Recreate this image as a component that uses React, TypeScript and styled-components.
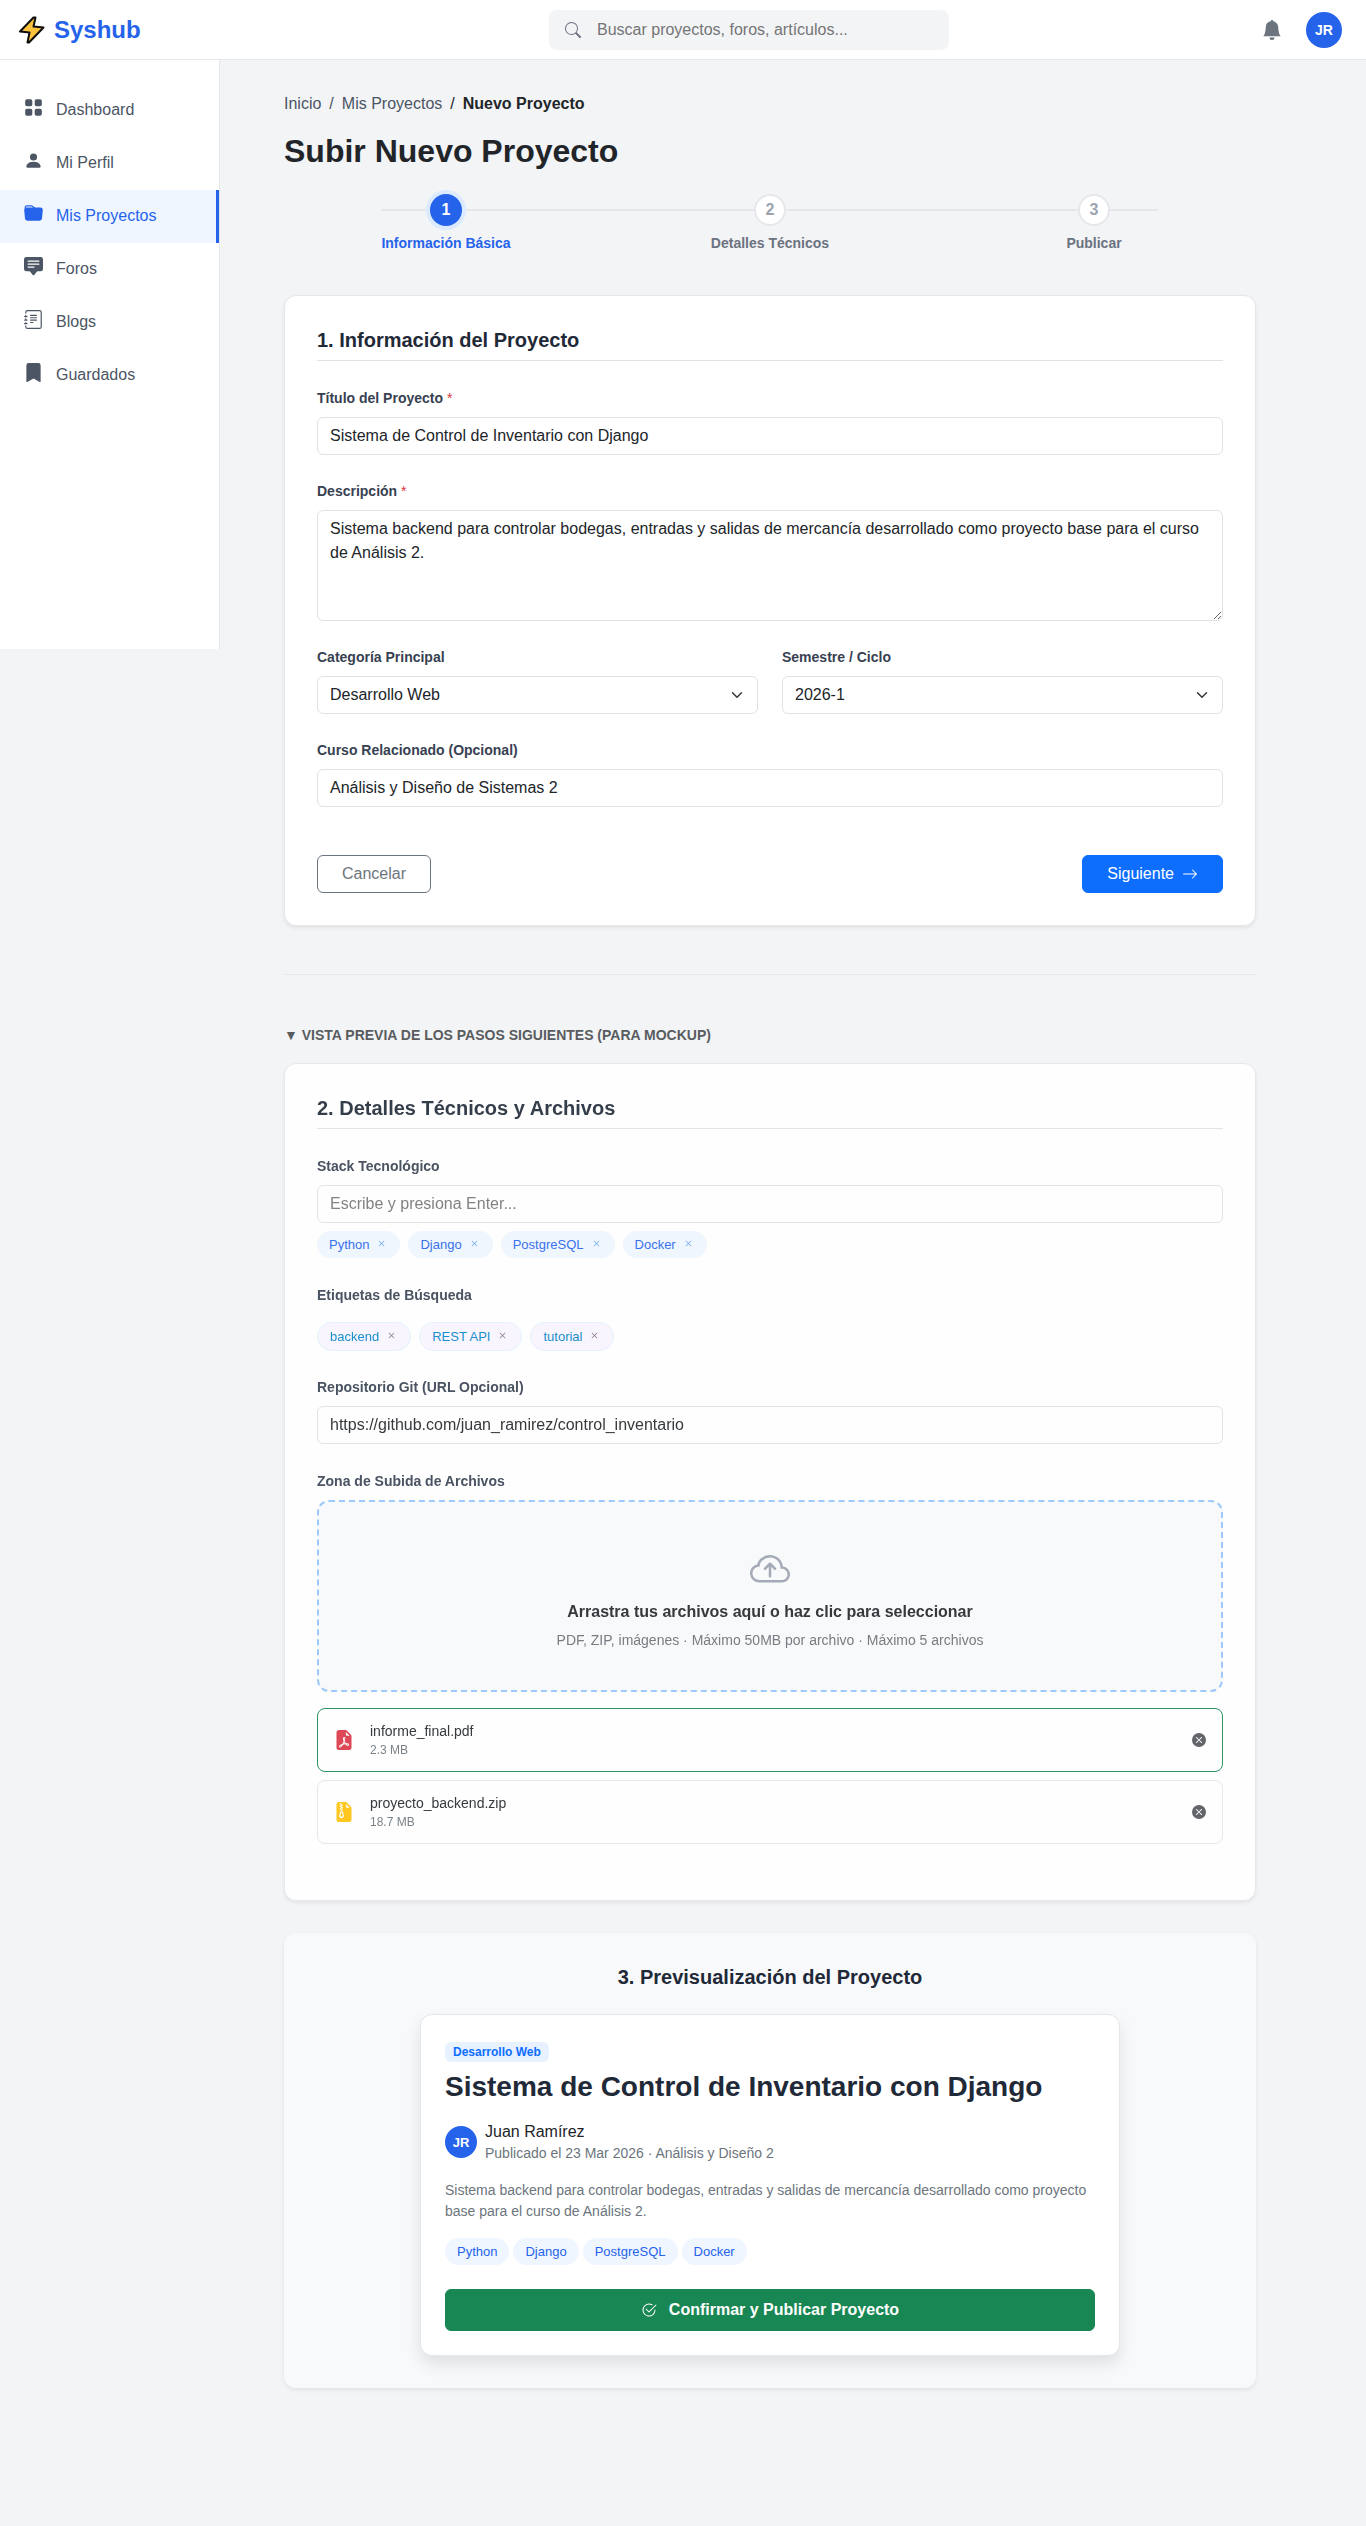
import React, { useState } from "react";
import styled, { createGlobalStyle, css } from "styled-components";
import {
  BsArrowRight,
  BsBellFill,
  BsBookmarkFill,
  BsChatSquareTextFill,
  BsCheck2Circle,
  BsCloudArrowUp,
  BsFileEarmarkPdfFill,
  BsFileEarmarkZipFill,
  BsFolderFill,
  BsGridFill,
  BsJournalText,
  BsPersonFill,
  BsSearch,
  BsX,
  BsXCircleFill,
} from "react-icons/bs";

const GlobalStyle = createGlobalStyle`
  *, *::before, *::after { box-sizing: border-box; }
  body {
    margin: 0;
    background: #f3f4f6;
    color: #212529;
    font: 16px/24px "Liberation Sans", Arial, sans-serif;
  }
  h1, h2, h3, p, ol, ul { margin: 0; padding: 0; }
  ol, ul { list-style: none; }
  a { color: inherit; text-decoration: none; }
  button, input, select, textarea { font: inherit; color: inherit; }
  button { cursor: pointer; }
  svg { display: block; flex: none; }
`;

const Header = styled.header`
  display: flex;
  align-items: center;
  justify-content: space-between;
  height: 60px;
  padding: 0 24px 0 16px;
  background: #fff;
  border-bottom: 1px solid #e5e7eb;
`;

const Brand = styled.a`
  display: flex;
  align-items: center;
  gap: 6px;
  width: 220px;
  color: #2563eb;
  font-size: 24px;
  font-weight: 700;
`;

const SearchBox = styled.label`
  display: flex;
  align-items: center;
  gap: 16px;
  flex: 0 1 400px;
  height: 40px;
  padding: 0 16px;
  border-radius: 8px;
  background: #f3f4f6;
  color: #6b7280;

  input {
    flex: 1;
    min-width: 0;
    padding: 0;
    border: 0;
    outline: 0;
    background: transparent;
  }
`;

const HeaderActions = styled.div`
  display: flex;
  align-items: center;
  gap: 24px;
`;

const IconButton = styled.button`
  display: flex;
  padding: 0;
  border: 0;
  background: none;
  color: #6c757d;
`;

const Avatar = styled.span<{ $small?: boolean }>`
  display: flex;
  align-items: center;
  justify-content: center;
  flex: none;
  width: ${(p) => (p.$small ? 32 : 36)}px;
  height: ${(p) => (p.$small ? 32 : 36)}px;
  border-radius: 50%;
  background: #2563eb;
  color: #fff;
  font-size: ${(p) => (p.$small ? 13 : 14)}px;
  font-weight: 700;
`;

const Layout = styled.div`
  display: flex;
  align-items: flex-start;
`;

const Sidebar = styled.nav`
  flex: 0 0 220px;
  min-height: 589px;
  padding: 24px 0;
  background: #fff;
  border-right: 1px solid #e5e7eb;
`;

const NavItem = styled.a<{ $active?: boolean }>`
  display: flex;
  align-items: center;
  gap: 13px;
  height: 53px;
  padding: 0 21px 2px 24px;
  border-right: 3px solid transparent;
  color: #4b5563;

  svg { margin-bottom: 4px; }

  ${(p) =>
    p.$active &&
    css`
      background: #eff6ff;
      border-right-color: #2563eb;
      color: #2563eb;
    `}
`;

const Main = styled.main`
  flex: 1;
  min-width: 0;
  max-width: 1100px;
  padding: 32px 64px;
`;

const Breadcrumb = styled.ol`
  display: flex;
  color: #4b5563;

  li + li::before {
    content: "/";
    padding: 0 8px;
  }
  li[aria-current] {
    color: #212529;
    font-weight: 700;
  }
  li[aria-current]::before { font-weight: 400; }
`;

const PageTitle = styled.h1`
  margin: 16px 0 24px;
  font-size: 32px;
  line-height: 38px;
`;

const Stepper = styled.ol`
  display: grid;
  grid-template-columns: repeat(3, 1fr);
  margin-bottom: 43px;
  background: linear-gradient(#e5e7eb, #e5e7eb) center 15px / 80% 2px no-repeat;
`;

const Step = styled.li<{ $active?: boolean }>`
  display: flex;
  flex-direction: column;
  align-items: center;
  gap: 8px;
  color: ${(p) => (p.$active ? "#2563eb" : "#6b7280")};
  font-size: 14px;
  font-weight: 700;
  line-height: 18px;
`;

const StepCircle = styled.span<{ $active?: boolean }>`
  display: flex;
  align-items: center;
  justify-content: center;
  width: 32px;
  height: 32px;
  border: 2px solid ${(p) => (p.$active ? "#2563eb" : "#e5e7eb")};
  border-radius: 50%;
  background: ${(p) => (p.$active ? "#2563eb" : "#fff")};
  color: ${(p) => (p.$active ? "#fff" : "#9ca3af")};
  box-shadow: ${(p) => (p.$active ? "0 0 0 4px #dbeafe" : "none")};
  font-size: 16px;
`;

const Card = styled.section<{ $muted?: boolean; $soft?: boolean }>`
  padding: 32px;
  border: ${(p) => (p.$soft ? "0" : "1px solid #e5e7eb")};
  border-radius: 12px;
  background: ${(p) => (p.$soft ? "#f8f9fb" : "#fff")};
  box-shadow: 0 2px 4px rgba(0, 0, 0, 0.075);
  opacity: ${(p) => (p.$muted ? 0.9 : 1)};
  margin-bottom: ${(p) => (p.$muted ? 32 : 0)}px;
`;

const CardTitle = styled.h2<{ $centered?: boolean }>`
  color: #1f2937;
  font-size: 20px;
  line-height: 24px;
  margin-bottom: 25px;
  ${(p) =>
    p.$centered
      ? css`
          text-align: center;
        `
      : css`
          padding-bottom: 8px;
          border-bottom: 1px solid #dee2e6;
        `}
`;

const Field = styled.div`
  margin-bottom: 24px;
`;

const FieldRow = styled.div`
  display: grid;
  grid-template-columns: 1fr 1fr;
  gap: 24px;
`;

const labelStyle = css`
  display: block;
  padding-top: 2px;
  margin-bottom: 8px;
  color: #374151;
  font-size: 14px;
  font-weight: 700;
  line-height: 21px;
`;

const Label = styled.label`
  ${labelStyle}
`;

const GroupLabel = styled.p`
  ${labelStyle}
  line-height: 22px;
`;

const Required = styled.span`
  color: #dc3545;
  font-weight: 400;
`;

const controlStyle = css`
  display: block;
  width: 100%;
  padding: 6px 12px;
  border: 1px solid #dee2e6;
  border-radius: 6px;
  background-color: #fff;
  outline: 0;
`;

const Input = styled.input`
  ${controlStyle}
  height: 38px;
`;

const TextArea = styled.textarea`
  ${controlStyle}
  height: 111px;
  resize: vertical;
`;

const Select = styled.select`
  ${controlStyle}
  height: 38px;
  padding-right: 36px;
  appearance: none;
  background: #fff
    url("data:image/svg+xml,%3csvg xmlns='http://www.w3.org/2000/svg' viewBox='0 0 16 16'%3e%3cpath fill='none' stroke='%23343a40' stroke-linecap='round' stroke-linejoin='round' stroke-width='2' d='m2 5 6 6 6-6'/%3e%3c/svg%3e")
    right 12px center / 16px 12px no-repeat;
`;

const FormActions = styled.div`
  display: flex;
  justify-content: space-between;
  padding-top: 24px;
`;

const Button = styled.button<{ $kind: "outline" | "primary" | "success" }>`
  display: flex;
  align-items: center;
  justify-content: center;
  gap: 8px;
  height: 38px;
  padding: 0 24px;
  border: 1px solid;
  border-radius: 6px;
  ${(p) =>
    ({
      outline: css`
        background: transparent;
        border-color: #6c757d;
        color: #6c757d;
      `,
      primary: css`
        background: #0d6efd;
        border-color: #0d6efd;
        color: #fff;
      `,
      success: css`
        width: 100%;
        height: 42px;
        gap: 12px;
        background: #198754;
        border-color: #198754;
        color: #fff;
        font-weight: 700;
      `,
    })[p.$kind]}
`;

const Divider = styled.hr`
  height: 1px;
  margin: 48px 0;
  border: 0;
  background: #e6e8ea;
`;

const SectionLabel = styled.p`
  margin-bottom: 16px;
  color: #595c5f;
  font-size: 14px;
  font-weight: 700;
  text-transform: uppercase;
`;

const ChipList = styled.ul<{ $gap: number; $top?: number }>`
  display: flex;
  flex-wrap: wrap;
  gap: ${(p) => p.$gap}px;
  margin-top: ${(p) => p.$top ?? 0}px;
`;

const Chip = styled.li<{ $tag?: boolean }>`
  display: flex;
  align-items: center;
  gap: 6px;
  padding: 4px 12px;
  border-radius: 16px;
  background: ${(p) => (p.$tag ? "#faf5ff" : "#eff6ff")};
  border: ${(p) => (p.$tag ? "1px solid #e0f2fe" : "0")};
  color: ${(p) => (p.$tag ? "#0284c7" : "#2563eb")};
  font-size: 13px;
  line-height: 19px;
`;

const ChipRemove = styled.button<{ $tag?: boolean }>`
  padding: 0 0 2px;
  border: 0;
  background: none;
  color: ${(p) => (p.$tag ? "#85707f" : "#6aa8f5")};
`;

const DropZone = styled.label`
  display: flex;
  flex-direction: column;
  align-items: center;
  padding: 48px 40px 38px;
  border: 2px dashed #93c5fd;
  border-radius: 12px;
  background: #f8fafc;
  cursor: pointer;

  svg {
    margin-bottom: 10px;
    color: #9ca3af;
  }
  strong { margin-bottom: 4px; }
`;

const HiddenFile = styled.input`
  display: none;
`;

const Hint = styled.span`
  color: #6b6f75;
  font-size: 14px;
`;

const FileList = styled.ul`
  display: grid;
  gap: 8px;
  margin-top: 16px;
`;

const FileItem = styled.li<{ $done?: boolean; $color: string }>`
  display: flex;
  align-items: center;
  gap: 16px;
  height: 64px;
  padding: 0 16px;
  border: 1px solid ${(p) => (p.$done ? "#198754" : "#e5e7eb")};
  border-radius: 8px;
  background: #fff;

  > svg { color: ${(p) => p.$color}; }
`;

const FileInfo = styled.div`
  flex: 1;
  font-size: 14px;
  line-height: 20px;

  small {
    display: block;
    color: #6c757d;
    font-size: 12px;
    line-height: 18px;
  }
`;

const RemoveFile = styled(IconButton)`
  color: #52565b;
`;

const Preview = styled.article`
  max-width: 700px;
  margin: 0 auto;
  padding: 24px;
  border: 1px solid #e5e7eb;
  border-radius: 12px;
  background: #fff;
  box-shadow: 0 8px 16px rgba(0, 0, 0, 0.1);
`;

const Badge = styled.span`
  display: block;
  width: fit-content;
  margin: 3px 0 8px;
  padding: 0 8px;
  border-radius: 6px;
  background: #e7f1ff;
  color: #0d6efd;
  font-size: 12px;
  font-weight: 700;
  line-height: 20px;
`;

const PreviewTitle = styled.h3`
  margin-bottom: 16px;
  color: #1f2937;
  font-size: 28px;
  line-height: 34px;
`;

const Author = styled.div`
  display: flex;
  align-items: center;
  gap: 8px;
  line-height: 23px;
  margin-bottom: 16px;
`;

const Meta = styled.p`
  color: #6c757d;
  font-size: 14px;
  line-height: 21px;
`;

const Description = styled.p`
  margin-bottom: 16px;
  color: #6c757d;
  font-size: 14px;
  line-height: 21px;
`;

const PublishArea = styled.div`
  margin-top: 24px;
`;

const Bolt = () => (
  <svg width="32" height="32" viewBox="0 0 32 32" aria-hidden="true">
    <path
      d="M17.5 3.5 4 17.5 13.5 18.5 11.5 28.5 13 28.5 27.5 13.5 17.5 12.5 19.5 3.5Z"
      fill="#fdc23e"
      stroke="#0d0d0d"
      strokeWidth="2"
      strokeLinejoin="round"
    />
  </svg>
);

const navigation = [
  { label: "Dashboard", icon: BsGridFill },
  { label: "Mi Perfil", icon: BsPersonFill },
  { label: "Mis Proyectos", icon: BsFolderFill, active: true },
  { label: "Foros", icon: BsChatSquareTextFill },
  { label: "Blogs", icon: BsJournalText },
  { label: "Guardados", icon: BsBookmarkFill },
];

const steps = ["Información Básica", "Detalles Técnicos", "Publicar"];
const technologies = ["Python", "Django", "PostgreSQL", "Docker"];

const initialFiles = [
  { name: "informe_final.pdf", size: "2.3 MB", icon: BsFileEarmarkPdfFill, color: "#dc3545", done: true },
  { name: "proyecto_backend.zip", size: "18.7 MB", icon: BsFileEarmarkZipFill, color: "#ffc107", done: false },
];

function RemovableChips({ items, tag, top, onRemove }: {
  items: string[];
  tag?: boolean;
  top: number;
  onRemove: (item: string) => void;
}) {
  return (
    <ChipList $gap={8} $top={top}>
      {items.map((item) => (
        <Chip key={item} $tag={tag}>
          {item}
          <ChipRemove type="button" $tag={tag} aria-label={`Quitar ${item}`} onClick={() => onRemove(item)}>
            <BsX size={13} />
          </ChipRemove>
        </Chip>
      ))}
    </ChipList>
  );
}

export default function App() {
  const [stack, setStack] = useState(technologies);
  const [tags, setTags] = useState(["backend", "REST API", "tutorial"]);
  const [files, setFiles] = useState(initialFiles);

  return (
    <>
      <GlobalStyle />
      <Header>
        <Brand href="#">
          <Bolt />
          Syshub
        </Brand>
        <SearchBox>
          <BsSearch size={16} />
          <input type="search" aria-label="Buscar" placeholder="Buscar proyectos, foros, artículos..." />
        </SearchBox>
        <HeaderActions>
          <IconButton type="button" aria-label="Notificaciones">
            <BsBellFill size={20} />
          </IconButton>
          <Avatar>JR</Avatar>
        </HeaderActions>
      </Header>

      <Layout>
        <Sidebar>
          {navigation.map(({ label, icon: Icon, active }) => (
            <NavItem key={label} href="#" $active={active}>
              <Icon size={19} />
              {label}
            </NavItem>
          ))}
        </Sidebar>

        <Main>
          <Breadcrumb>
            <li><a href="#">Inicio</a></li>
            <li><a href="#">Mis Proyectos</a></li>
            <li aria-current="page">Nuevo Proyecto</li>
          </Breadcrumb>
          <PageTitle>Subir Nuevo Proyecto</PageTitle>

          <Stepper>
            {steps.map((step, index) => (
              <Step key={step} $active={index === 0}>
                <StepCircle $active={index === 0}>{index + 1}</StepCircle>
                {step}
              </Step>
            ))}
          </Stepper>

          <Card>
            <CardTitle>1. Información del Proyecto</CardTitle>
            <Field>
              <Label htmlFor="title">Título del Proyecto <Required>*</Required></Label>
              <Input id="title" defaultValue="Sistema de Control de Inventario con Django" />
            </Field>
            <Field>
              <Label htmlFor="description">Descripción <Required>*</Required></Label>
              <TextArea
                id="description"
                defaultValue="Sistema backend para controlar bodegas, entradas y salidas de mercancía desarrollado como proyecto base para el curso de Análisis 2."
              />
            </Field>
            <FieldRow>
              <Field>
                <Label htmlFor="category">Categoría Principal</Label>
                <Select id="category">
                  <option>Desarrollo Web</option>
                </Select>
              </Field>
              <Field>
                <Label htmlFor="term">Semestre / Ciclo</Label>
                <Select id="term">
                  <option>2026-1</option>
                </Select>
              </Field>
            </FieldRow>
            <Field>
              <Label htmlFor="course">Curso Relacionado (Opcional)</Label>
              <Input id="course" defaultValue="Análisis y Diseño de Sistemas 2" />
            </Field>
            <FormActions>
              <Button type="button" $kind="outline">Cancelar</Button>
              <Button type="button" $kind="primary">
                Siguiente
                <BsArrowRight size={16} />
              </Button>
            </FormActions>
          </Card>

          <Divider />
          <SectionLabel>▼ Vista previa de los pasos siguientes (Para mockup)</SectionLabel>

          <Card $muted>
            <CardTitle>2. Detalles Técnicos y Archivos</CardTitle>
            <Field>
              <Label htmlFor="stack">Stack Tecnológico</Label>
              <Input id="stack" placeholder="Escribe y presiona Enter..." />
              <RemovableChips
                items={stack}
                top={8}
                onRemove={(item) => setStack(stack.filter((s) => s !== item))}
              />
            </Field>
            <Field>
              <GroupLabel>Etiquetas de Búsqueda</GroupLabel>
              <RemovableChips
                items={tags}
                tag
                top={16}
                onRemove={(item) => setTags(tags.filter((t) => t !== item))}
              />
            </Field>
            <Field>
              <Label htmlFor="repo">Repositorio Git (URL Opcional)</Label>
              <Input id="repo" type="url" defaultValue="https://github.com/juan_ramirez/control_inventario" />
            </Field>
            <Field>
              <GroupLabel>Zona de Subida de Archivos</GroupLabel>
              <DropZone>
                <BsCloudArrowUp size={40} />
                <strong>Arrastra tus archivos aquí o haz clic para seleccionar</strong>
                <Hint>PDF, ZIP, imágenes · Máximo 50MB por archivo · Máximo 5 archivos</Hint>
                <HiddenFile type="file" multiple />
              </DropZone>
              <FileList>
                {files.map(({ name, size, icon: Icon, color, done }) => (
                  <FileItem key={name} $done={done} $color={color}>
                    <Icon size={20} />
                    <FileInfo>
                      {name}
                      <small>{size}</small>
                    </FileInfo>
                    <RemoveFile
                      type="button"
                      aria-label={`Eliminar ${name}`}
                      onClick={() => setFiles(files.filter((f) => f.name !== name))}
                    >
                      <BsXCircleFill size={14} />
                    </RemoveFile>
                  </FileItem>
                ))}
              </FileList>
            </Field>
          </Card>

          <Card $soft>
            <CardTitle $centered>3. Previsualización del Proyecto</CardTitle>
            <Preview>
              <Badge>Desarrollo Web</Badge>
              <PreviewTitle>Sistema de Control de Inventario con Django</PreviewTitle>
              <Author>
                <Avatar $small>JR</Avatar>
                <div>
                  <p>Juan Ramírez</p>
                  <Meta>Publicado el 23 Mar 2026 · Análisis y Diseño 2</Meta>
                </div>
              </Author>
              <Description>
                Sistema backend para controlar bodegas, entradas y salidas de mercancía desarrollado como proyecto base
                para el curso de Análisis 2.
              </Description>
              <ChipList $gap={4}>
                {technologies.map((item) => (
                  <Chip key={item}>{item}</Chip>
                ))}
              </ChipList>
              <PublishArea>
                <Button type="button" $kind="success">
                  <BsCheck2Circle size={16} />
                  Confirmar y Publicar Proyecto
                </Button>
              </PublishArea>
            </Preview>
          </Card>
        </Main>
      </Layout>
    </>
  );
}
